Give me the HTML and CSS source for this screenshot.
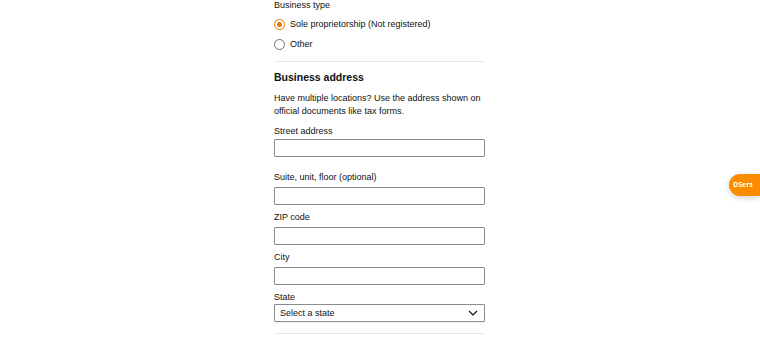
FILE: index.html
```html
<!DOCTYPE html>
<html lang="en">
<head>
    <meta charset="UTF-8">
    <meta name="viewport" content="width=device-width, initial-scale=1.0">
    <title>Business information</title>
    <link rel="stylesheet" href="styles.css">
</head>
<body>
    <div class="form">
        <div class="field-label">Business type</div>
        <div class="radio-group">
            <label class="radio-row">
                <span class="radio checked"></span>
                <span>Sole proprietorship (Not registered)</span>
            </label>
            <label class="radio-row">
                <span class="radio"></span>
                <span>Other</span>
            </label>
        </div>

        <hr class="divider">

        <h2 class="section-title">Business address</h2>
        <p class="section-note">Have multiple locations? Use the address shown on official documents like tax forms.</p>

        <div class="field field-first">
            <div class="field-label">Street address</div>
            <div class="input"></div>
        </div>
        <div class="field">
            <div class="field-label">Suite, unit, floor (optional)</div>
            <div class="input"></div>
        </div>
        <div class="field">
            <div class="field-label">ZIP code</div>
            <div class="input"></div>
        </div>
        <div class="field">
            <div class="field-label">City</div>
            <div class="input"></div>
        </div>
        <div class="field">
            <div class="field-label">State</div>
            <div class="input select">
                <span>Select a state</span>
                <svg width="10" height="6" viewBox="0 0 10 6"><path d="M1 1 L5 5 L9 1" fill="none" stroke="#0f1111" stroke-width="1.2"/></svg>
            </div>
        </div>

        <hr class="divider bottom">
    </div>

    <div class="dsers-tab">DSers</div>
</body>
</html>
```

FILE: styles.css
```css
body {
    margin: 0;
    height: 339px;
    overflow: hidden;
    background: #fff;
    font-family: 'Liberation Sans', Arial, sans-serif;
    color: #0f1111;
    font-size: 9px;
}

.form {
    width: 211px;
    margin-left: 274px;
    padding-top: 0;
    position: relative;
    top: -2px;
}

.field-label {
    line-height: 14px;
}

.radio-group {
    margin-top: 2px;
}

.radio-row {
    display: flex;
    align-items: center;
    gap: 5px;
    height: 20px;
}

.radio {
    width: 9px;
    height: 9px;
    border: 1px solid #6f7373;
    border-radius: 50%;
    box-sizing: content-box;
    flex-shrink: 0;
    position: relative;
}

.radio.checked {
    border-color: #e77600;
}

.radio.checked::after {
    content: "";
    position: absolute;
    left: 2px;
    top: 2px;
    width: 5px;
    height: 5px;
    border-radius: 50%;
    background: #e77600;
}

.divider {
    border: none;
    border-top: 1px solid #e7e7e7;
    margin: 7px 0 0;
}

.divider.bottom {
    margin-top: 11px;
}

.section-title {
    font-size: 10.5px;
    font-weight: bold;
    line-height: 18px;
    margin: 6px 0 0;
}

.section-note {
    margin: 6px 0 0;
    line-height: 13px;
}

.field {
    margin-top: 5px;
}

.field-first {
    margin-top: 6px;
    margin-bottom: 13px;
}

.input {
    height: 18px;
    box-sizing: border-box;
    border: 1px solid #888c8c;
    border-radius: 1px;
    margin-top: 3px;
    background: #fff;
}

.field-first .input {
    margin-top: 1px;
}

.select {
    display: flex;
    align-items: center;
    justify-content: space-between;
    padding: 0 6px 0 5px;
    margin-top: 0;
    box-shadow: 0 1px 0 rgba(15, 17, 17, 0.05);
}

.dsers-tab {
    position: fixed;
    right: 0;
    top: 174px;
    width: 27px;
    height: 22px;
    padding-left: 4px;
    background: #fb8c00;
    color: #fff;
    font-family: 'Open Sans', sans-serif;
    font-weight: bold;
    font-size: 7px;
    line-height: 22px;
    border-radius: 11px 0 0 11px;
    box-shadow: 0 2px 6px rgba(0, 0, 0, 0.18);
}
```
